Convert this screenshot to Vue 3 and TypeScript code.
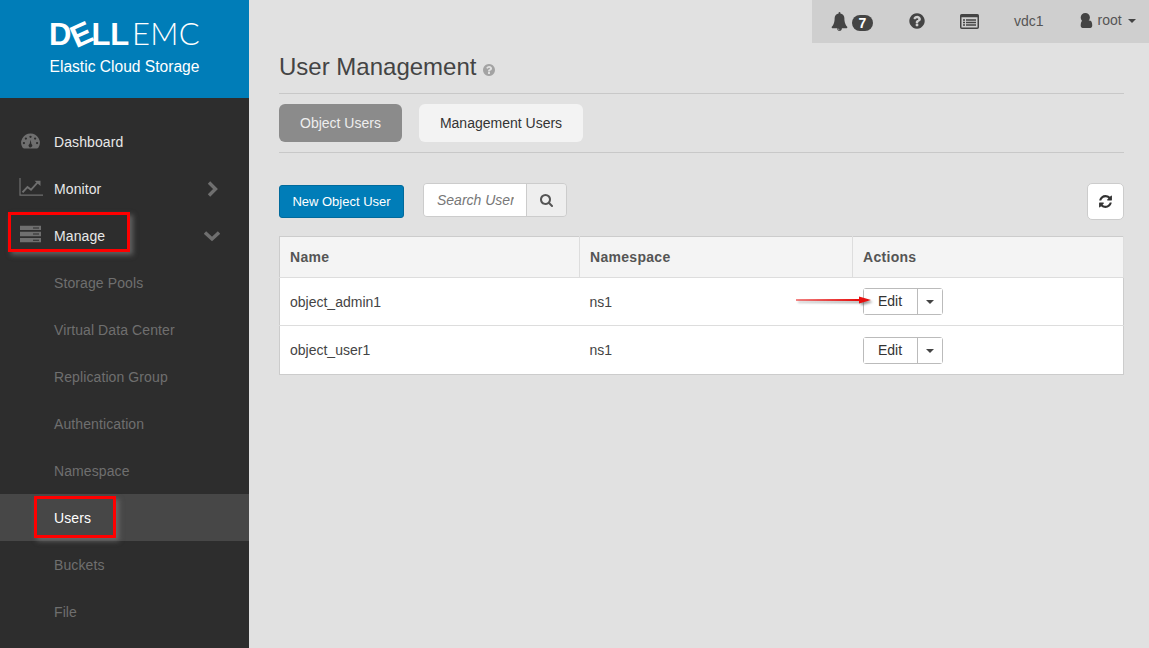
<script setup lang="ts">
interface NavItem {
  label: string
  icon?: 'gauge' | 'chart' | 'server'
  chevron?: 'right' | 'down'
  active?: boolean
}

interface UserRow {
  name: string
  namespace: string
}

const navItems: NavItem[] = [
  { label: 'Dashboard', icon: 'gauge' },
  { label: 'Monitor', icon: 'chart', chevron: 'right' },
  { label: 'Manage', icon: 'server', chevron: 'down' },
  { label: 'Storage Pools' },
  { label: 'Virtual Data Center' },
  { label: 'Replication Group' },
  { label: 'Authentication' },
  { label: 'Namespace' },
  { label: 'Users', active: true },
  { label: 'Buckets' },
  { label: 'File' }
]

const rows: UserRow[] = [
  { name: 'object_admin1', namespace: 'ns1' },
  { name: 'object_user1', namespace: 'ns1' }
]

const questionPath =
  'M1024 1376v-192q0-14-9-23t-23-9h-192q-14 0-23 9t-9 23v192q0 14 9 23t23 9h192q14 0 23-9t9-23zm256-672q0-88-55.5-163t-138.5-116-170-41q-243 0-371 213-15 24 8 42l132 100q7 6 19 6 16 0 25-12 53-68 86-92 34-24 86-24 48 0 85.5 26t37.5 59q0 38-20 61t-68 45q-63 28-115.5 86.5t-52.5 125.5v36q0 14 9 23t23 9h192q14 0 23-9t9-23q0-19 21.5-49.5t54.5-49.5q32-18 49-28.5t46-35 44.5-48 28-60.5 12.5-81zm384 192q0 209-103 385.5t-279.5 279.5-385.5 103-385.5-103-279.5-279.5-103-385.5 103-385.5 279.5-279.5 385.5-103 385.5 103 279.5 279.5 103 385.5z'
</script>

<template>
  <div class="app">
    <aside class="sidebar">
      <div class="brand">
        <div class="logo">
          <span class="dell">D<span class="tilt">E</span>LL</span><span class="emc">EMC</span>
        </div>
        <div class="product">Elastic Cloud Storage</div>
      </div>
      <nav class="nav">
        <div
          v-for="item in navItems"
          :key="item.label"
          class="nav-item"
          :class="{ top: item.icon, active: item.active }"
        >
          <span class="nav-icon">
            <svg v-if="item.icon === 'gauge'" class="gauge-icon" width="21" height="16" viewBox="0 0 22 18">
              <path
                fill="#6f6f6f"
                fill-rule="evenodd"
                d="M11 0.5a10.5 10.5 0 0 1 9 15.9q-0.5 0.9-1.6 0.9H3.6q-1.1 0-1.6-0.9A10.5 10.5 0 0 1 11 0.5zM11 3a1.3 1.3 0 1 0 0 2.6a1.3 1.3 0 0 0 0-2.6zM5.8 5a1.3 1.3 0 1 0 0 2.6a1.3 1.3 0 0 0 0-2.6zM16.2 5a1.3 1.3 0 1 0 0 2.6a1.3 1.3 0 0 0 0-2.6zM3.6 10a1.3 1.3 0 1 0 0 2.6a1.3 1.3 0 0 0 0-2.6zM18.4 10a1.3 1.3 0 1 0 0 2.6a1.3 1.3 0 0 0 0-2.6zM11.2 7.5L10 12.4a2 2 0 1 0 2 0.1z"
              />
            </svg>
            <svg v-else-if="item.icon === 'chart'" class="chart-icon" width="24" height="18" viewBox="0 0 24 20" preserveAspectRatio="none">
              <path fill="none" stroke="#6f6f6f" stroke-width="1.2" d="M1 0v19h23" />
              <path fill="none" stroke="#6f6f6f" stroke-width="2" d="M3.5 16l5-6 3.500 3 7-8.500" />
              <path fill="#6f6f6f" d="M15.500 3h6v6z" />
            </svg>
            <svg v-else-if="item.icon === 'server'" class="server-icon" width="21" height="17" viewBox="0 0 21 17">
              <path
                fill="#6f6f6f"
                fill-rule="evenodd"
                d="M0 0h21v4.600H0zM13 2h6v1h-6zM0 6.200h21v4.600H0zM13 8h6v1h-6zM0 12.400h21V17H0zM13 14.200h6v1h-6z"
              />
            </svg>
          </span>
          <span class="nav-label">{{ item.label }}</span>
          <svg v-if="item.chevron === 'right'" class="chevron" width="14" height="16" viewBox="0 0 14 16">
            <path fill="none" stroke="#6f6f6f" stroke-width="3.400" d="M3 1.500L9.500 8L3 14.500" />
          </svg>
          <svg v-else-if="item.chevron === 'down'" class="chevron" width="16" height="14" viewBox="0 0 16 14">
            <path fill="none" stroke="#6f6f6f" stroke-width="3.400" d="M1 3.500L8 10L15 3.500" />
          </svg>
        </div>
      </nav>
    </aside>

    <main class="main">
      <header class="topbar">
        <svg class="bell" width="17" height="19" viewBox="0 0 1792 1792" preserveAspectRatio="none">
          <path
            fill="#444"
            d="M912 1696q0-16-16-16-59 0-101.500-42.500t-42.500-101.500q0-16-16-16t-16 16q0 73 51.500 124.500t124.500 51.500q16 0 16-16zm816-288q0 52-38 90t-90 38h-448q0 106-75 181t-181 75-181-75-75-181h-448q-52 0-90-38t-38-90q50-42 91-88t85-119.500 74.500-158.500 50-206 19.500-260q0-152 117-282.500t307-158.500q-8-19-8-39 0-40 28-68t68-28 68 28 28 68q0 20-8 39 190 28 307 158.500t117 282.500q0 139 19.500 260t50 206 74.500 158.500 85 119.500 91 88z"
          />
        </svg>
        <span class="badge">7</span>
        <svg class="help" width="18" height="18" viewBox="0 0 1792 1792">
          <path fill="#444" :d="questionPath" />
        </svg>
        <svg class="list" width="19" height="15" viewBox="0 0 19 15">
          <rect x="0.750" y="0.750" width="17.500" height="13.500" rx="1" fill="none" stroke="#444" stroke-width="1.500" />
          <rect x="0.750" y="0.750" width="17.500" height="2.500" fill="#444" />
          <path stroke="#444" stroke-width="1.300" d="M3 6h2M6 6h10M3 8.500h2M6 8.500h10M3 11h2M6 11h10" />
        </svg>
        <span class="vdc">vdc1</span>
        <svg class="user" width="15" height="15" viewBox="200 0 1400 1664">
          <path
            fill="#444"
            d="M1536 1399q0 109-62.500 187t-150.500 78h-854q-88 0-150.500-78t-62.500-187q0-85 8.500-160.500t31.500-152 58.500-131 94-89 134.500-34.500q131 128 313 128t313-128q76 0 134.500 34.500t94 89 58.500 131 31.500 152 8.500 160.500zm-256-887q0 212-150 362t-362 150-362-150-150-362 150-362 362-150 362 150 150 362z"
          />
        </svg>
        <span class="root">root</span>
        <span class="caret dark"></span>
      </header>

      <section class="content">
        <div class="title-row">
          <h1>User Management</h1>
          <svg width="14" height="14" viewBox="0 0 1792 1792">
            <path fill="#a3a3a3" :d="questionPath" />
          </svg>
        </div>

        <div class="tabs">
          <button class="tab selected">Object Users</button>
          <button class="tab">Management Users</button>
        </div>

        <div class="toolbar">
          <button class="new-btn">New Object User</button>
          <div class="search">
            <input class="search-input" placeholder="Search User" />
            <span class="search-btn">
              <svg width="13" height="13" viewBox="0 0 1664 1664">
                <path
                  fill="#555"
                  d="M1152 704q0-185-131.500-316.500t-316.500-131.500-316.500 131.500-131.500 316.500 131.500 316.500 316.500 131.500 316.500-131.500 131.500-316.500zm512 832q0 52-38 90t-90 38q-54 0-90-38l-343-342q-179 124-399 124-143 0-273.500-55.500t-225-150-150-225-55.500-273.500 55.500-273.500 150-225 225-150 273.500-55.500 273.500 55.500 225 150 150 225 55.500 273.500q0 220-124 399l343 343q37 37 37 90z"
                />
              </svg>
            </span>
          </div>
          <button class="refresh">
            <svg width="15" height="15" viewBox="0 0 1792 1792">
              <path
                fill="#333"
                d="M1639 1056q0 5-1 7-64 268-268 434.500t-478 166.500q-146 0-282.500-55t-243.500-157l-129 129q-19 19-45 19t-45-19-19-45v-448q0-26 19-45t45-19h448q26 0 45 19t19 45-19 45l-137 137q71 66 161 102t187 36q134 0 250-65t186-179q11-17 53-117 8-23 30-23h192q13 0 22.500 9.500t9.500 22.500zm25-800v448q0 26-19 45t-45 19h-448q-26 0-45-19t-19-45 19-45l138-138q-148-137-349-137-134 0-250 65t-186 179q-11 17-53 117-8 23-30 23h-199q-13 0-22.500-9.500t-9.500-22.500v-7q65-268 270-434.500t480-166.500q146 0 284 55.500t245 156.500l130-129q19-19 45-19t45 19 19 45z"
              />
            </svg>
          </button>
        </div>

        <table class="users">
          <thead>
            <tr>
              <th class="col-name">Name</th>
              <th class="col-ns">Namespace</th>
              <th>Actions</th>
            </tr>
          </thead>
          <tbody>
            <tr v-for="row in rows" :key="row.name">
              <td>{{ row.name }}</td>
              <td>{{ row.namespace }}</td>
              <td>
                <div class="split">
                  <button class="split-main">Edit</button>
                  <button class="split-toggle"><span class="caret dark"></span></button>
                </div>
              </td>
            </tr>
          </tbody>
        </table>
      </section>
    </main>

    <!-- red annotations drawn over the screenshot -->
    <div class="mark mark-manage"></div>
    <div class="mark mark-users"></div>
    <svg class="arrow" width="80" height="14" viewBox="0 0 80 14">
      <path d="M1 6.400L64 6V3.500L76 7L64 10.500V8L1 7.600z" fill="#e8100f" />
    </svg>
  </div>
</template>

<style scoped>
.app {
  position: relative;
  display: flex;
  height: 648px;
  overflow: hidden;
  font-family: "Liberation Sans", Arial, sans-serif;
  font-size: 14px;
  color: #444;
}

.sidebar {
  flex: 0 0 249px;
  background: #2d2d2d;
}

.brand {
  height: 98px;
  box-sizing: border-box;
  padding-top: 18px;
  background: #007db8;
  color: #fff;
  text-align: center;
}

.logo {
  display: flex;
  justify-content: center;
  align-items: baseline;
  height: 31px;
  line-height: 31px;
  font-size: 31px;
}

.dell {
  font-weight: 700;
  letter-spacing: -0.2px;
}

.tilt {
  display: inline-block;
  transform: rotate(-24deg);
}

.emc {
  margin-left: 3px;
  font-family: Lato, "Liberation Sans", sans-serif;
  font-weight: 300;
  letter-spacing: 0.3px;
}

.product {
  margin-top: 8px;
  font-size: 15.6px;
  line-height: 20px;
}

.nav {
  padding-top: 20px;
}

.nav-item {
  display: flex;
  align-items: center;
  height: 47px;
  padding-left: 54px;
  color: #6f6f6f;
  letter-spacing: 0.1px;
  position: relative;
}

.nav-item.top {
  color: #e8e8e8;
}

.nav-item.active {
  background: #474747;
  color: #fff;
}

.nav-icon {
  position: absolute;
  left: 20px;
  top: 50%;
  display: flex;
  transform: translateY(-50%);
}

.gauge-icon {
  transform: translateY(-1px);
}

.chart-icon {
  margin-left: -1px;
  transform: translateY(-2px);
}

.server-icon {
  transform: translateY(-2px);
}

.chevron {
  position: absolute;
  right: 29px;
  top: 50%;
  transform: translateY(-50%);
}

.main {
  flex: 1;
  min-width: 0;
  display: flex;
  flex-direction: column;
  background: #e1e1e1;
}

.topbar {
  align-self: flex-end;
  display: flex;
  align-items: center;
  width: 337px;
  height: 43px;
  box-sizing: border-box;
  padding-left: 19px;
  background: #cfcfcf;
}

.bell {
  margin-right: 4px;
}

.badge {
  width: 21px;
  height: 16px;
  margin-top: 3px;
  border-radius: 8px;
  background: #444;
  color: #fff;
  font-size: 14px;
  font-weight: 700;
  line-height: 16px;
  text-align: center;
}

.help {
  margin-left: 35px;
  margin-top: -2px;
}

.list {
  margin-left: 34px;
}

.vdc {
  margin-left: 35px;
  margin-top: -1px;
  color: #555;
}

.user {
  margin-left: 35px;
  margin-top: -3px;
}

.root {
  margin-left: 4px;
  margin-top: -3px;
  color: #555;
}

.caret {
  display: inline-block;
  width: 0;
  height: 0;
  border-left: 4px solid transparent;
  border-right: 4px solid transparent;
  border-top: 4px solid #444;
}

.topbar .caret {
  margin-left: 6px;
  margin-top: -2px;
}

.content {
  display: flex;
  flex-direction: column;
  padding: 0 25px 0 30px;
}

.title-row {
  display: flex;
  align-items: center;
  gap: 6px;
  height: 50px;
  border-bottom: 1px solid #c8c8c8;
}

h1 {
  margin: 0 0 2px;
  font-size: 24px;
  font-weight: 400;
  line-height: 48px;
  color: #444;
}

.title-row svg {
  margin-top: 4px;
}

.tabs {
  display: flex;
  gap: 17px;
  padding: 10px 0;
  border-bottom: 1px solid #c8c8c8;
}

.tab {
  height: 38px;
  padding: 0 21px;
  border: 0;
  border-radius: 6px;
  background: #f3f3f3;
  color: #333;
  font: inherit;
}

.tab.selected {
  background: #8b8b8b;
  color: #eee;
}

.toolbar {
  display: flex;
  align-items: flex-start;
  margin-top: 30px;
  height: 53px;
}

.new-btn {
  width: 125px;
  height: 33px;
  margin-top: 2px;
  padding: 0;
  border: 1px solid #006a9c;
  border-radius: 3px;
  background: #007db8;
  color: #fff;
  font: inherit;
  font-size: 13px;
}

.search {
  display: flex;
  width: 144px;
  height: 34px;
  margin-left: 19px;
  box-sizing: border-box;
  border: 1px solid #ccc;
  border-radius: 4px;
  overflow: hidden;
}

.search-input {
  width: 103px;
  box-sizing: border-box;
  padding: 0 12px 0 13px;
  border: 0;
  border-right: 1px solid #ccc;
  outline: none;
  background: #fff;
  font: inherit;
}

.search-input::placeholder {
  color: #777;
  font-style: italic;
  opacity: 1;
}

.search-btn {
  flex: 1;
  display: flex;
  align-items: center;
  justify-content: center;
  background: #eee;
}

.refresh {
  display: flex;
  align-items: center;
  justify-content: center;
  width: 37px;
  height: 37px;
  margin-left: auto;
  padding: 0;
  border: 1px solid #ccc;
  border-radius: 5px;
  background: #fff;
}

.users {
  width: 845px;
  border-collapse: collapse;
  table-layout: fixed;
  background: #fff;
  border: 1px solid #ccc;
}

.col-name {
  width: 300px;
}

.col-ns {
  width: 273px;
}

th {
  box-sizing: border-box;
  height: 41px;
  padding: 0 10px;
  border-right: 1px solid #ddd;
  border-bottom: 1px solid #ddd;
  background: #f4f4f4;
  text-align: left;
  color: #555;
  font-weight: 700;
  letter-spacing: 0.3px;
}

td {
  box-sizing: border-box;
  height: 48px;
  padding: 0 10px;
  border-bottom: 1px solid #ddd;
  color: #444;
}

tr:last-child td {
  height: 49px;
  border-bottom: 0;
}

.split {
  display: flex;
  width: 80px;
  height: 27px;
  box-sizing: border-box;
  border: 1px solid #bbb;
  border-radius: 3px;
}

.split-main {
  width: 54px;
  padding: 0 0 1px;
  border: 0;
  border-right: 1px solid #bbb;
  background: #fff;
  color: #333;
  font: inherit;
  font-size: 14px;
}

.split-toggle {
  flex: 1;
  padding: 0;
  border: 0;
  background: #fff;
}

.split-toggle .caret {
  display: block;
  margin: 1px auto 0;
}

.mark {
  position: absolute;
  box-sizing: border-box;
  border: 3px solid #f00;
  box-shadow: 3px 3px 5px rgba(120, 120, 120, 0.7);
}

.mark-manage {
  left: 8px;
  top: 212px;
  width: 122px;
  height: 40px;
}

.mark-users {
  left: 34px;
  top: 496px;
  width: 82px;
  height: 42px;
}

.arrow {
  position: absolute;
  left: 795px;
  top: 293px;
  filter: drop-shadow(2px 2px 1px rgba(90, 90, 90, 0.6));
}
</style>
